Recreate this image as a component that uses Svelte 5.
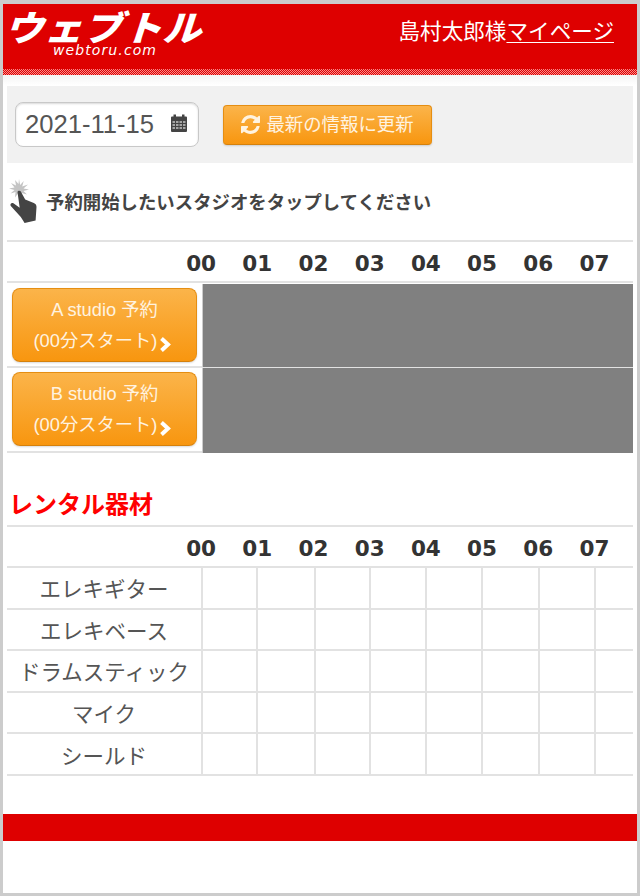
<script>
	const hours = ['00', '01', '02', '03', '04', '05', '06', '07'];
	const studios = ['A studio 予約', 'B studio 予約'];
	const rentals = ['エレキギター', 'エレキベース', 'ドラムスティック', 'マイク', 'シールド'];
</script>

<div class="frame">
	<header class="site-header">
		<div class="logo">
			<span class="logo-main">ウェブトル</span>
			<span class="logo-sub">webtoru.com</span>
		</div>
		<div class="user">島村太郎様<a href="#top">マイページ</a></div>
	</header>
	<div class="dither"></div>

	<main>
		<div class="toolbar">
			<div class="date-field">
				<span>2021-11-15</span>
				<svg width="18" height="20" viewBox="0 0 18 20" fill="#444">
					<path d="M1 4.5a1 1 0 0 1 1-1h1.500V1.500h2.500v2h6v-2h2.500v2H16a1 1 0 0 1 1 1V18a1 1 0 0 1-1 1H2a1 1 0 0 1-1-1z" />
					<path fill="#f5f5f5" d="M2.500 8h2.500v2H2.500zM6 8h2.500v2H6zM9.500 8H12v2H9.500zM13 8h2.500v2H13zM2.500 11h2.500v2H2.500zM6 11h2.500v2H6zM9.500 11H12v2H9.500zM13 11h2.500v2H13zM2.500 14h2.500v2H2.500zM6 14h2.500v2H6zM9.500 14H12v2H9.500zM13 14h2.500v2H13z" opacity="0.55" />
				</svg>
			</div>
			<button class="btn refresh">
				<svg width="19" height="19" viewBox="0 0 1536 1536" fill="currentColor">
					<path d="M1511 928q0 5-1 7-64 268-268 434.5t-478 166.5q-146 0-282.5-55t-243.500-157l-129 129q-19 19-45 19t-45-19-19-45v-448q0-26 19-45t45-19h448q26 0 45 19t19 45-19 45l-137 137q71 66 161 102t187 36q134 0 250-65t186-179q11-17 53-117 8-23 30-23h192q13 0 22.500 9.500t9.500 22.500zm25-800v448q0 26-19 45t-45 19h-448q-26 0-45-19t-19-45 19-45l138-138q-148-137-349-137-134 0-250 65t-186 179q-11 17-53 117-8 23-30 23h-199q-13 0-22.500-9.500t-9.500-22.500v-7q65-268 270-434.500t480-166.500q146 0 284 55.500t245 156.500l130-129q19-19 45-19t45 19 19 45z" />
				</svg>
				<span>最新の情報に更新</span>
			</button>
		</div>

		<div class="hint">
			<svg width="32" height="46" viewBox="7 178 32 46">
				<path fill="#c4c4c4" d="M18 178l1.200 6 3.500-4-1.500 5.500 5.800-2-4.500 4 5.500 1-5.500 1.500 3.500 3.500-5.500-1.500-.5 5-3-4.500-3 4 .5-5.500-5 1.500 4-3.500-5.500-1.500 5.500-1-3.500-4.500 5 2.500-1-5.500 3.500 4z" />
				<path fill="#444" d="M16.500 191c.2-1.400 2.600-1.800 3.300-.4l4.400 8 8.600 3.400c1.800.8 2.800 2.200 2.700 4l-.9 13.400-11 2.600-3.800-6L9.800 205c-1.200-1.800.6-3.800 2.600-2.800l6.300 4.500z" />
			</svg>
			<span>予約開始したいスタジオをタップしてください</span>
		</div>

		<div class="hours">
			{#each hours as h}
				<span>{h}</span>
			{/each}
		</div>
		<div class="studios">
			{#each studios as name}
				<div class="studio-row">
					<div class="studio-cell">
						<button class="btn studio">
							<span>{name}</span>
							<span class="second">(00分スタート)
								<svg width="13" height="17" viewBox="0 0 13 17" fill="none" stroke="#fff" stroke-width="4">
									<path d="M2.500 2.500L9 8.500l-6.500 6" />
								</svg>
							</span>
						</button>
					</div>
					<div class="closed"></div>
				</div>
			{/each}
		</div>

		<h2>レンタル器材</h2>
		<div class="hours">
			{#each hours as h}
				<span>{h}</span>
			{/each}
		</div>
		<div class="rentals">
			{#each rentals as name}
				<div class="rental-row">
					<div class="rental-name">{name}</div>
					{#each hours as h}
						<div class="slot"></div>
					{/each}
				</div>
			{/each}
		</div>
	</main>

	<footer></footer>
</div>

<style>
	:global(body) {
		margin: 0;
		background: #fff;
	}

	.frame {
		box-sizing: border-box;
		width: 640px;
		height: 896px;
		border: 3px solid #ccc;
		border-top-width: 4px;
		background: #fff;
		color: #444;
		font-family: 'Liberation Sans', 'Noto Sans CJK JP', sans-serif;
	}

	.site-header {
		display: flex;
		justify-content: space-between;
		height: 65px;
		background: #de0000;
		color: #fff;
	}

	.logo {
		display: flex;
		flex-direction: column;
		align-items: flex-start;
		padding: 0 0 0 7px;
		width: 220px;
	}

	.logo-main {
		font-family: 'Noto Sans CJK JP', sans-serif;
		font-weight: 900;
		font-size: 39px;
		line-height: 58px;
		letter-spacing: 0.5px;
		transform: skewX(-18deg) scaleY(0.9);
		transform-origin: left center;
		margin: -7px 0 -13px -1px;
		white-space: nowrap;
	}

	.logo-sub {
		font-family: 'DejaVu Sans', sans-serif;
		font-style: italic;
		font-size: 14px;
		line-height: 15px;
		letter-spacing: 1.1px;
		margin: 1px 0 0 43px;
		white-space: nowrap;
	}

	.user {
		font-size: 21.6px;
		line-height: 30px;
		padding: 13px 23px 0 0;
		white-space: nowrap;
	}

	.user a {
		color: #fff;
		text-decoration: underline;
		text-underline-offset: 3px;
		text-decoration-thickness: 1px;
	}

	.dither {
		height: 6px;
		background: repeating-conic-gradient(#de0000 0 25%, #f98a8a 0 50%) 0 0 / 2px 2px;
	}

	main {
		padding: 11px 4px 0;
		background: linear-gradient(#f4f4f4, #fff 10px);
	}

	.toolbar {
		display: flex;
		align-items: center;
		gap: 24px;
		box-sizing: border-box;
		height: 77px;
		padding: 0 8px;
		background: #f1f1f1;
	}

	.date-field {
		display: flex;
		align-items: center;
		justify-content: space-between;
		box-sizing: border-box;
		width: 184px;
		height: 45px;
		padding: 0 10px 0 9px;
		background: #fff;
		border: 1px solid #c8c8c8;
		border-radius: 8px;
		box-shadow: inset 0 1px 2px rgba(0, 0, 0, 0.15);
		font-size: 25.6px;
		color: #555;
	}

	.date-field svg {
		margin-top: -3px;
	}

	.btn {
		box-sizing: border-box;
		background: linear-gradient(#fbb44a, #f8960f);
		border: 1px solid #e58e12;
		border-bottom-color: #d5810c;
		color: #fff;
		font-family: inherit;
		padding: 0;
		box-shadow: 0 1px 2px rgba(0, 0, 0, 0.15);
	}

	.refresh {
		display: flex;
		align-items: center;
		justify-content: center;
		gap: 6px;
		width: 209px;
		height: 40px;
		border-radius: 4px;
		font-size: 18.4px;
		color: #fff3e0;
	}

	.refresh span {
		margin-top: -3px;
	}

	.hint {
		display: flex;
		align-items: center;
		gap: 6px;
		box-sizing: border-box;
		height: 77px;
		padding: 0 0 0 1px;
		font-size: 18.4px;
		font-weight: 700;
		color: #444;
	}

	.hint svg {
		flex: none;
	}

	.hint span {
		margin-top: -1px;
		white-space: nowrap;
	}

	.hours {
		display: grid;
		grid-template-columns: repeat(8, 56.2px);
		box-sizing: border-box;
		height: 43px;
		padding: 4px 0 0 166px;
		border-top: 2px solid #e2e2e2;
		border-bottom: 2px solid #e2e2e2;
		align-items: center;
		font-family: 'DejaVu Sans', sans-serif;
		font-weight: 700;
		font-size: 21.5px;
		text-align: center;
		color: #333;
	}

	.studios {
		padding-top: 1px;
	}

	.studio-row {
		display: flex;
		height: 85px;
		border-bottom: 2px solid #e2e2e2;
		box-sizing: border-box;
	}

	.studio-row:first-child {
		height: 84px;
	}

	.studio-cell {
		box-sizing: border-box;
		width: 195px;
		padding: 4px 0 0 5px;
	}

	.studio {
		display: flex;
		flex-direction: column;
		align-items: center;
		width: 185px;
		height: 74px;
		border-radius: 8px;
		font-size: 18.3px;
		line-height: 31px;
		padding-top: 5px;
		color: #fff3e0;
	}

	.second {
		display: flex;
		align-items: center;
		gap: 2px;
		margin-left: -3px;
	}

	.second svg {
		margin-top: 8px;
	}

	.closed {
		flex: 1;
		background: #808080;
		border-left: 1px solid #ccc;
		margin-bottom: -2px;
	}

	.studio-row:first-child .closed {
		margin-bottom: -1px;
	}

	h2 {
		margin: 0;
		height: 72px;
		padding: 35px 0 0 2px;
		box-sizing: border-box;
		font-size: 24px;
		line-height: 34px;
		font-weight: 700;
		color: #f00;
	}

	.rental-row {
		display: grid;
		grid-template-columns: 194px 55px 58px 55px 56px 56px 57px 56px 39px;
		box-sizing: border-box;
		height: 41.6px;
		border-bottom: 2px solid #e2e2e2;
	}

	.rental-name {
		display: flex;
		align-items: center;
		justify-content: center;
		font-size: 21.5px;
		color: #555;
		white-space: nowrap;
	}

	.slot {
		border-left: 2px solid #e2e2e2;
	}

	footer {
		height: 27px;
		margin-top: 38px;
		background: #de0000;
	}
</style>
